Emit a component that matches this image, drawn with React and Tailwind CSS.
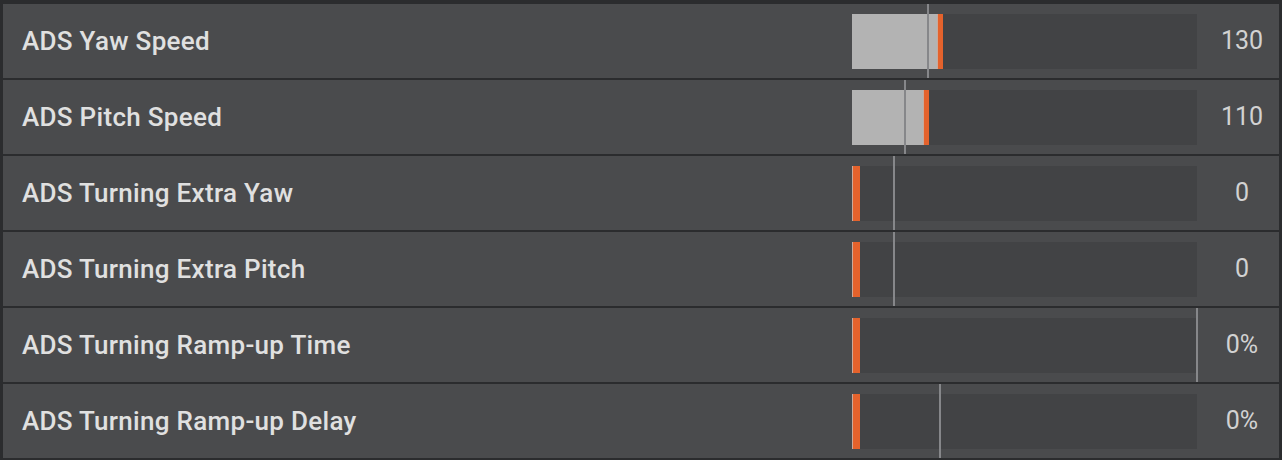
import React from 'react';

const rows = [
    { label: 'ADS Yaw Speed', value: '130', fill: 85, mark: 75 },
    { label: 'ADS Pitch Speed', value: '110', fill: 71, mark: 52 },
    { label: 'ADS Turning Extra Yaw', value: '0', fill: 0, mark: 41 },
    { label: 'ADS Turning Extra Pitch', value: '0', fill: 0, mark: 41 },
    { label: 'ADS Turning Ramp-up Time', value: '0%', fill: 0, mark: 344 },
    { label: 'ADS Turning Ramp-up Delay', value: '0%', fill: 0, mark: 87 },
];

function Slider({ fill, mark }) {
    return (
        <div className="relative h-full w-[345px] flex items-center">
            <div className="relative h-[55px] w-full bg-[#424345] flex">
                {fill > 0 && <div className="h-full bg-[#b3b3b3]" style={{ width: fill }} />}
                <div className={`h-full bg-[#e4622c] border-l border-[#c9a99a] ${fill > 0 ? 'w-[6px]' : 'w-[8px]'}`} />
            </div>
            <div className="absolute top-0 bottom-0 w-[2px] bg-[#86878a]" style={{ left: mark }} />
        </div>
    );
}

export default function App() {
    return (
        <div
            className="w-[1282px] h-[460px] bg-[#2b2c2e] pt-[4px] px-[3px] flex flex-col gap-[2px] overflow-hidden"
            style={{ fontFamily: 'Roboto, sans-serif' }}
        >
            {rows.map((row) => (
                <div key={row.label} className="h-[74px] shrink-0 bg-[#4a4b4d] flex items-center">
                    <div className="flex-1 pl-[19px] text-[26px] font-medium text-[#e0e0e0] tracking-[0.3px]">{row.label}</div>
                    <Slider fill={row.fill} mark={row.mark} />
                    <div className="w-[82px] pl-[8px] text-center text-[25px] text-[#d2d2d2]">{row.value}</div>
                </div>
            ))}
        </div>
    );
}
